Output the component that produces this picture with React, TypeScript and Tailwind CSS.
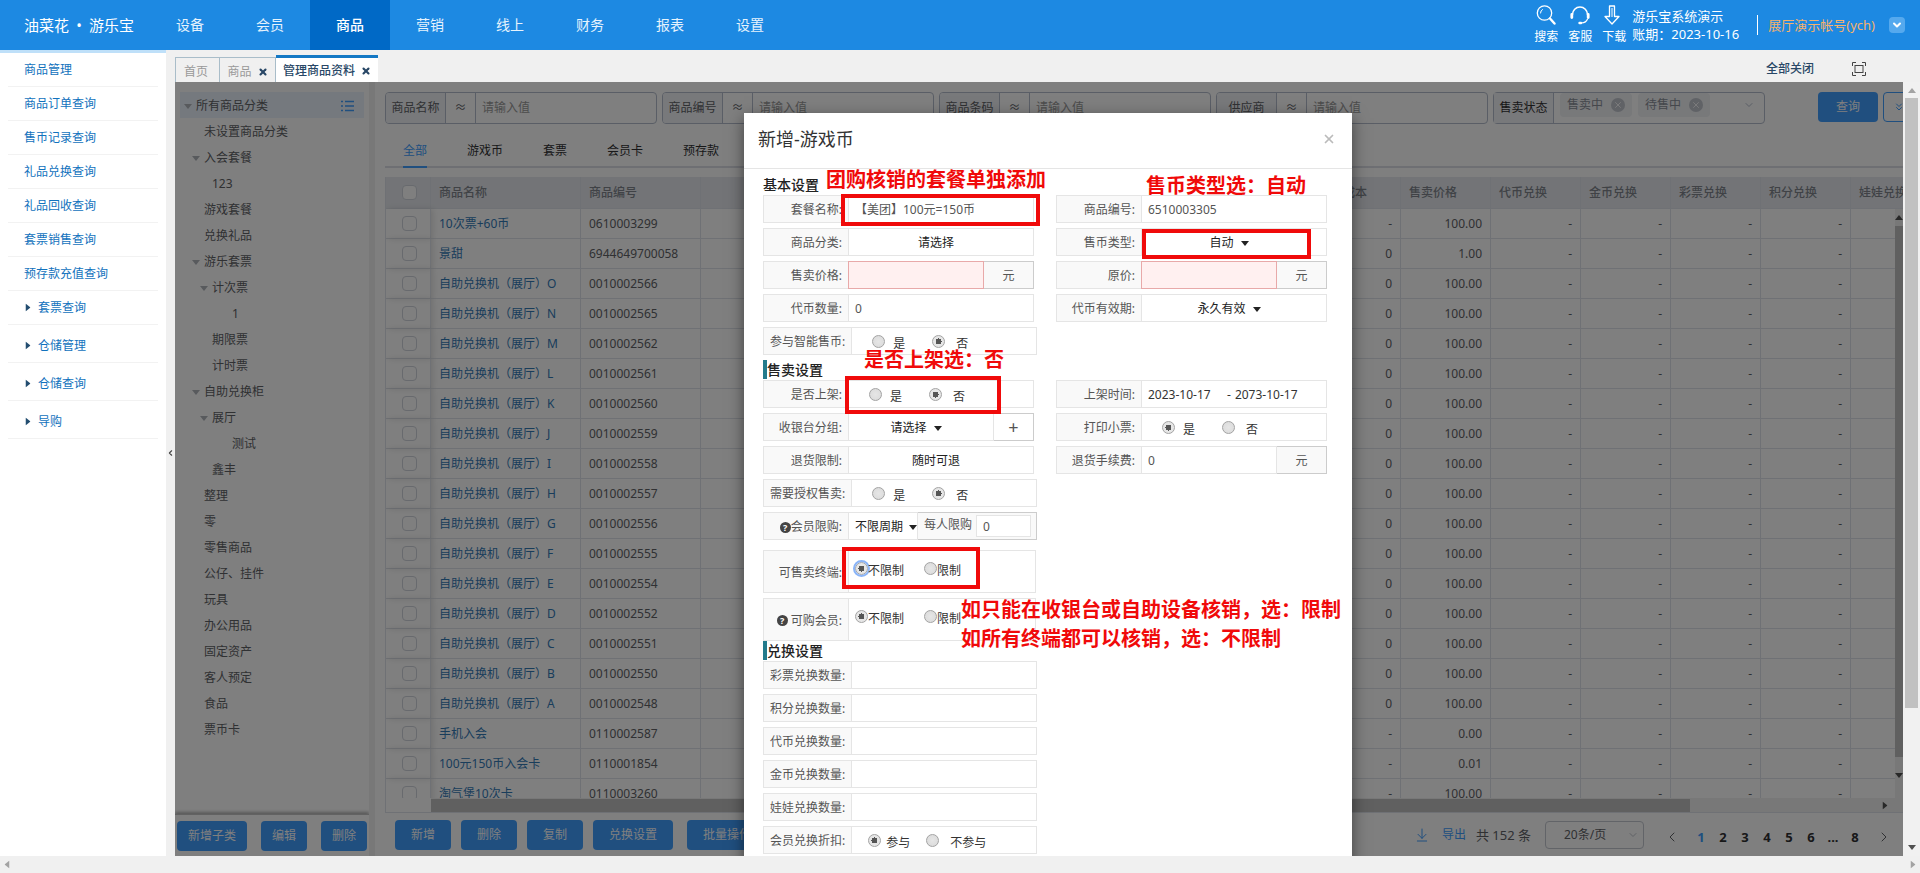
import React, { useState } from 'react';
import { Search, ChevronDown, ChevronsDown, ChevronLeft, ChevronRight, ArrowDownToLine, X } from 'lucide-react';

const NAV = ['设备', '会员', '商品', '营销', '线上', '财务', '报表', '设置'];

const MENU = ['商品管理', '商品订单查询', '售币记录查询', '礼品兑换查询', '礼品回收查询', '套票销售查询', '预存款充值查询'];
const MENU_GROUPS = ['套票查询', '仓储管理', '仓储查询', '导购'];

const INDENT = ['pl-1', 'pl-3', 'pl-5', 'pl-10'];

const TREE = [
  { name: '所有商品分类', level: 0, open: true },
  { name: '未设置商品分类', level: 1 },
  { name: '入会套餐', level: 1, open: true },
  { name: '123', level: 2 },
  { name: '游戏套餐', level: 1 },
  { name: '兑换礼品', level: 1 },
  { name: '游乐套票', level: 1, open: true },
  { name: '计次票', level: 2, open: true },
  { name: '1', level: 3 },
  { name: '期限票', level: 2 },
  { name: '计时票', level: 2 },
  { name: '自助兑换柜', level: 1, open: true },
  { name: '展厅', level: 2, open: true },
  { name: '测试', level: 3 },
  { name: '鑫丰', level: 2 },
  { name: '整理', level: 1 },
  { name: '零', level: 1 },
  { name: '零售商品', level: 1 },
  { name: '公仔、挂件', level: 1 },
  { name: '玩具', level: 1 },
  { name: '办公用品', level: 1 },
  { name: '固定资产', level: 1 },
  { name: '客人预定', level: 1 },
  { name: '食品', level: 1 },
  { name: '票币卡', level: 1 },
];

const GOODS = [
  ['10次票+60币', '0610003299', '-', '100.00'],
  ['景甜', '6944649700058', '0', '1.00'],
  ['自助兑换机（展厅）O', '0010002566', '0', '100.00'],
  ['自助兑换机（展厅）N', '0010002565', '0', '100.00'],
  ['自助兑换机（展厅）M', '0010002562', '0', '100.00'],
  ['自助兑换机（展厅）L', '0010002561', '0', '100.00'],
  ['自助兑换机（展厅）K', '0010002560', '0', '100.00'],
  ['自助兑换机（展厅）J', '0010002559', '0', '100.00'],
  ['自助兑换机（展厅）I', '0010002558', '0', '100.00'],
  ['自助兑换机（展厅）H', '0010002557', '0', '100.00'],
  ['自助兑换机（展厅）G', '0010002556', '0', '100.00'],
  ['自助兑换机（展厅）F', '0010002555', '0', '100.00'],
  ['自助兑换机（展厅）E', '0010002554', '0', '100.00'],
  ['自助兑换机（展厅）D', '0010002552', '0', '100.00'],
  ['自助兑换机（展厅）C', '0010002551', '0', '100.00'],
  ['自助兑换机（展厅）B', '0010002550', '0', '100.00'],
  ['自助兑换机（展厅）A', '0010002548', '0', '100.00'],
  ['手机入会', '0110002587', '-', '0.00'],
  ['100元150币入会卡', '0110001854', '-', '0.01'],
  ['淘气堡10次卡', '0110003260', '-', '100.00'],
];

const EXCHANGE = ['代币兑换', '金币兑换', '彩票兑换', '积分兑换', '娃娃兑换'];

function Triangle({ className = '' }: { className?: string }) {
  return (
    <svg viewBox="0 0 8 5" className={`w-2 h-[5px] shrink-0 fill-current ${className}`}>
      <path d="M0 0h8L4 5z" />
    </svg>
  );
}

function HeaderIcon({ label, children }: { label: string; children: React.ReactNode }) {
  return (
    <button className="w-6 flex flex-col items-center gap-1 text-xs leading-4 whitespace-nowrap">
      {children}
      {label}
    </button>
  );
}

function Header() {
  return (
    <header className="h-[50px] shrink-0 flex items-stretch bg-[#1d89e2] text-white">
      <div className="w-[150px] pl-6 flex items-center text-[15px] whitespace-nowrap">
        油菜花<span className="w-5 text-center">•</span>游乐宝
      </div>
      <nav className="flex text-sm">
        {NAV.map((item) => (
          <a
            key={item}
            href="#"
            className={`w-20 flex items-center justify-center ${item === '商品' ? 'bg-[#0069c6] font-medium' : 'text-[#e6f3fd]'}`}
          >
            {item}
          </a>
        ))}
      </nav>
      <div className="ml-auto pr-[15px] flex items-center">
        <div className="flex gap-[10px] pr-[6px]">
          <HeaderIcon label="搜索">
            <svg viewBox="0 0 20 20" className="w-5 h-5" fill="none" stroke="currentColor" strokeLinecap="round">
              <circle cx="8.5" cy="8" r="7.2" strokeWidth="1.3" />
              <path d="M4.500 8a4 4 0 0 1 2-3.500" strokeWidth="1" />
              <path d="M14 13.500l4.500 5" strokeWidth="2.4" />
            </svg>
          </HeaderIcon>
          <HeaderIcon label="客服">
            <svg viewBox="0 0 20 20" className="w-5 h-5" fill="none" stroke="currentColor" strokeLinecap="round">
              <path d="M2.5 9.5a7.5 7.5 0 0 1 15 0" strokeWidth="1.6" />
              <path d="M1.8 9.5v3M18.2 9.5v3" strokeWidth="2.8" />
              <path d="M17.5 14c-.8 2.2-3 3.8-6 4" strokeWidth="1.2" />
              <path d="M9.5 18h1.5" strokeWidth="2.4" />
            </svg>
          </HeaderIcon>
          <HeaderIcon label="下载">
            <svg viewBox="0 0 20 20" className="w-5 h-5" fill="none" stroke="currentColor" strokeWidth="1.3" strokeLinejoin="round">
              <path d="M5.5 1h5v10.5H15L8 19 1 11.500h4.500z" />
              <path d="M8 3v9" strokeWidth="1" />
            </svg>
          </HeaderIcon>
        </div>
        <div className="w-[113px] text-[13px] leading-[18px] whitespace-nowrap">
          <p>游乐宝系统演示</p>
          <p>账期：2023-10-16</p>
        </div>
        <div className="ml-3 w-px h-5 bg-white" />
        <span className="ml-[10px] mr-[14px] text-[13px] text-[#f6b26b] whitespace-nowrap">展厅演示帐号(ych)</span>
        <button aria-label="账号菜单" className="w-4 h-4 flex items-center justify-center rounded-sm bg-[#55a9ee]">
          <ChevronDown className="w-3 h-3" strokeWidth={4} />
        </button>
      </div>
    </header>
  );
}

function Sidebar() {
  return (
    <aside className="w-[166px] shrink-0 bg-white border-t-[3px] border-[#bfe0f9] px-2 text-[#1272bd]">
      {MENU.map((item) => (
        <a key={item} href="#" className="h-[34px] pl-4 flex items-center border-b border-[#f2f2f2]">
          {item}
        </a>
      ))}
      <div className="flex flex-col gap-1">
        {MENU_GROUPS.map((item) => (
          <a key={item} href="#" className="h-[34px] pl-4 flex items-center gap-[6px] border-b border-[#f2f2f2]">
            <Triangle className="-rotate-90 text-[#234d70]" />
            {item}
          </a>
        ))}
      </div>
    </aside>
  );
}

function TabBar() {
  return (
    <div className="h-8 flex items-end">
      <a href="#" className="w-[45px] h-[25px] flex items-center pl-2 border border-b-0 border-[#a9bdc9] text-[#999] pt-1">
        首页
      </a>
      <a href="#" className="w-14 h-[25px] flex items-center justify-center gap-[6px] border border-b-0 border-l-0 border-[#a9bdc9] text-[#999] pt-1">
        商品
        <X className="w-[10px] h-[10px] text-[#284766]" strokeWidth={5} />
      </a>
      <a href="#" className="w-[102px] h-[27px] flex items-center justify-center gap-[6px] border-t-[3px] border-[#1478c4] bg-white text-[#284766] font-medium pt-[2px]">
        管理商品资料
        <X className="w-[10px] h-[10px]" strokeWidth={5} />
      </a>
      <div className="ml-auto h-[27px] flex items-center pr-[54px] text-[#284766]">
        <button className="font-medium">全部关闭</button>
        <button aria-label="全屏" className="ml-[38px]">
          <svg viewBox="0 0 14 14" className="w-[14px] h-[14px]" fill="none" stroke="#444" strokeWidth="1">
            <rect x="3" y="3.500" width="8" height="7" />
            <path d="M.5 4V.5H4M10 .5h3.500V4M13.500 10v3.500H10M4 13.500H.5V10" />
          </svg>
        </button>
      </div>
    </div>
  );
}

function Button({ children, className = '' }: { children: React.ReactNode; className?: string }) {
  return (
    <button className={`h-[30px] shrink-0 rounded bg-[#409eff] text-white whitespace-nowrap ${className}`}>{children}</button>
  );
}

function CategoryTree() {
  return (
    <div className="w-[194px] shrink-0 flex flex-col bg-white text-[#606266]">
      <ul className="flex-1 min-h-0 overflow-hidden pt-[10px] px-[5px]">
        {TREE.map((node, i) => (
          <li
            key={i}
            className={`h-[26px] flex items-center gap-1 pt-[2px] pr-[10px] ${INDENT[node.level]} ${i === 0 ? 'bg-[#ebf3fc]' : ''}`}
          >
            <span className="w-2 flex text-[#b0b4bb]">{node.open && <Triangle />}</span>
            {node.name}
            {i === 0 && (
              <svg viewBox="0 0 13 12" className="ml-auto w-[13px] h-3" stroke="#409eff" strokeWidth="1.500">
                <path d="M0 1.500h2M4 1.500h9M0 6h2M4 6h9M0 10.500h2M4 10.500h9" />
              </svg>
            )}
          </li>
        ))}
      </ul>
      <div className="h-[42px] flex items-center gap-[14px] pl-[2px] border-t border-[#c4c4c4] shadow-[0_-2px_3px_rgba(0,0,0,0.3)]">
        <Button className="w-[70px]">新增子类</Button>
        <Button className="w-[46px]">编辑</Button>
        <Button className="w-[46px]">删除</Button>
      </div>
    </div>
  );
}

function SearchField({ id, label }: { id: string; label: string }) {
  return (
    <div className="w-[272px] shrink-0 flex items-stretch border border-[#b4bccc] rounded overflow-hidden">
      <label htmlFor={id} className="w-[60px] shrink-0 flex items-center justify-center bg-[#f0f2f6] border-r border-[#b4bccc]">
        {label}
      </label>
      <span className="w-[30px] shrink-0 flex items-center justify-center border-r border-[#b4bccc]">≈</span>
      <input id={id} placeholder="请输入值" className="min-w-0 flex-1 px-[6px] outline-none placeholder:text-[#999]" />
    </div>
  );
}

function Tag({ children }: { children: React.ReactNode }) {
  return (
    <span className="h-6 w-[72px] flex items-center justify-center gap-2 rounded-sm bg-[#f0f2f5] text-[#8a8f99]">
      {children}
      <span className="w-[14px] h-[14px] rounded-full bg-[#c0c4cc] text-white flex items-center justify-center">
        <X className="w-[10px] h-[10px]" />
      </span>
    </span>
  );
}

function SearchBar() {
  return (
    <div className="h-8 flex items-stretch gap-[5px] text-[#606266]">
      <SearchField id="q-name" label="商品名称" />
      <SearchField id="q-code" label="商品编号" />
      <SearchField id="q-barcode" label="商品条码" />
      <SearchField id="q-supplier" label="供应商" />
      <div className="w-[272px] shrink-0 flex border border-[#b4bccc] rounded">
        <span className="w-[60px] flex items-center justify-center bg-[#f0f2f6] border-r border-[#b4bccc] text-[#303133]">售卖状态</span>
        <div className="flex-1 flex items-start gap-[6px] pl-[6px] pr-[9px]">
          <Tag>售卖中</Tag>
          <Tag>待售中</Tag>
          <ChevronDown className="ml-auto w-3 h-6 text-[#b4bccc]" strokeWidth={2} />
        </div>
      </div>
      <Button className="ml-12 w-[60px]">查询</Button>
      <button aria-label="展开" className="w-[30px] h-[30px] shrink-0 border border-[#409eff] rounded text-[#409eff] pl-[9px]">
        <ChevronsDown className="w-3 h-3" />
      </button>
    </div>
  );
}

function GoodsTable() {
  const th = 'px-2 border-b border-r border-[#dfe3ea] bg-[#e6e9ee] text-left font-medium text-[#80858d] whitespace-nowrap';
  const td = 'px-2 border-b border-r border-[#dfe3ea]';
  const box = 'block ml-2 appearance-none w-[15px] h-[15px] border border-[#d0d4dc] rounded-sm bg-white';
  return (
    <div className="relative flex-1 min-h-0 mt-[9px] flex flex-col overflow-hidden border-l border-b border-[#dfe3ea]">
      <div className="flex-1 min-h-0 overflow-hidden">
        <table className="w-[1555px] table-fixed border-separate border-spacing-0 text-[#606266]">
          <colgroup>
            <col className="w-[45px]" />
            <col className="w-[150px]" />
            <col className="w-[120px]" />
            <col className="w-[610px]" />
            <col span={7} className="w-[90px]" />
          </colgroup>
          <thead>
            <tr className="h-8">
              <th className={th}>
                <input type="checkbox" aria-label="全选" className={box} />
              </th>
              <th className={th}>商品名称</th>
              <th className={th}>商品编号</th>
              <th className={th}></th>
              <th className={th}>商品成本</th>
              <th className={th}>售卖价格</th>
              {EXCHANGE.map((name) => (
                <th key={name} className={th}>{name}</th>
              ))}
            </tr>
          </thead>
          <tbody>
            {GOODS.map(([name, code, cost, price]) => (
              <tr key={code} className="h-[30px]">
                <td className={`${td} shadow-[2px_0_6px_rgba(0,0,0,0.12)]`}>
                  <input type="checkbox" aria-label={name} className={box} />
                </td>
                <td className={`${td} text-[#337ab7] whitespace-nowrap`}>{name}</td>
                <td className={td}>{code}</td>
                <td className={td}></td>
                <td className={`${td} text-right`}>{cost}</td>
                <td className={`${td} text-right`}>{price}</td>
                {EXCHANGE.map((col) => (
                  <td key={col} className={`${td} text-right`}>-</td>
                ))}
              </tr>
            ))}
          </tbody>
        </table>
      </div>
      <div className="h-[14px] shrink-0 ml-[45px] flex items-center bg-[#f1f1f1] pr-[14px]">
        <div className="w-[1259px] h-[13px] bg-[#c1c1c1]" />
        <Triangle className="ml-auto -rotate-90 text-[#505050]" />
      </div>
      {/* body scrollbar, half hidden behind the page edge */}
      <div className="absolute right-0 top-8 bottom-[14px] w-2 flex flex-col items-center bg-[#f1f1f1] pt-[6px] pb-5 text-[#505050]">
        <Triangle className="rotate-180" />
        <div className="mt-[6px] flex-1 w-2 bg-[#c1c1c1]" />
        <Triangle className="mt-4" />
      </div>
    </div>
  );
}

function Pager() {
  return (
    <div className="ml-auto shrink-0 flex items-center pr-[11px] text-[#606266]">
      <button className="flex items-center gap-3 text-[#409eff]">
        <ArrowDownToLine className="w-4 h-4" strokeWidth={1.500} />
        导出
      </button>
      <span className="ml-[10px] text-[13px]">共 152 条</span>
      <div className="ml-[14px] w-[99px] h-7 flex items-center border border-[#c4c8d0] rounded-sm pl-[18px] pr-1">
        <select aria-label="每页条数" className="appearance-none flex-1 outline-none">
          <option>20条/页</option>
        </select>
        <ChevronDown className="w-3 h-3 text-[#c0c4cc]" />
      </div>
      <div className="flex items-center pt-1">
        <button aria-label="上一页" className="ml-5">
          <ChevronLeft className="w-4 h-4" strokeWidth={1.500} />
        </button>
        <div className="flex mx-[10px] text-[13px] font-bold text-[#303133]">
          {['1', '2', '3', '4', '5', '6', '...', '8'].map((p) => (
            <button key={p} className={`w-[22px] ${p === '1' ? 'text-[#409eff]' : ''}`}>{p}</button>
          ))}
        </div>
        <button aria-label="下一页">
          <ChevronRight className="w-4 h-4" strokeWidth={1.500} />
        </button>
      </div>
    </div>
  );
}

function GoodsPanel() {
  return (
    <div className="flex-1 min-w-0 flex flex-col overflow-hidden bg-white pt-[10px] pl-[10px]">
      <SearchBar />
      <div className="mt-3 h-8 shrink-0 flex gap-10 pl-[18px] border-b-2 border-[#dcdfe6] text-[#303133]">
        {['全部', '游戏币', '套票', '会员卡', '预存款'].map((tab, i) => (
          <button key={tab} className={`h-8 border-b-2 whitespace-nowrap ${i === 0 ? 'border-[#409eff] text-[#409eff]' : 'border-transparent'}`}>
            {tab}
          </button>
        ))}
      </div>
      <GoodsTable />
      <div className="h-[43px] shrink-0 flex items-center gap-[10px] pl-[10px]">
        <Button className="px-4">新增</Button>
        <Button className="px-4">删除</Button>
        <Button className="px-4">复制</Button>
        <Button className="px-4">兑换设置</Button>
        <Button className="ml-1 px-4">批量操作</Button>
        <Pager />
      </div>
    </div>
  );
}

// ---- 新增弹窗 ----

const LINE = 'border-[#e5e5e5]';

function FormRow({ label, id, help, tall, children }: {
  label: string; id?: string; help?: boolean; tall?: boolean; children: React.ReactNode;
}) {
  return (
    <div className={`flex items-stretch ${tall ? 'h-[43px]' : 'h-7'}`}>
      <label
        htmlFor={id}
        className={`min-w-[85px] shrink-0 flex items-center justify-end px-[6px] pt-[2px] border border-r-0 ${LINE} bg-[#f9f9f9] text-[#555] whitespace-nowrap`}
      >
        {help && (
          <span className="w-[11px] h-[11px] rounded-full bg-[#444] text-white text-[9px] leading-[11px] font-bold text-center">?</span>
        )}
        {label}:
      </label>
      {children}
    </div>
  );
}

function TextField({ id, value = '', unit }: { id: string; value?: string; unit?: boolean }) {
  return (
    <div className="w-[186px] flex">
      <input
        id={id}
        defaultValue={value}
        className={`min-w-0 flex-1 px-[6px] pt-[2px] border ${LINE} bg-white text-[#555] outline-none`}
      />
      {unit && (
        <span className="w-[50px] flex items-center justify-center pt-[2px] border border-l-0 border-[#ccc] bg-[#f9f9f9] text-[#555]">元</span>
      )}
    </div>
  );
}

function PriceField({ id }: { id: string }) {
  return (
    <div className="w-[186px] flex">
      <input id={id} className="min-w-0 flex-1 px-[6px] border border-[#e8a9a9] bg-[#fff0f0] outline-none" />
      <span className="w-[50px] flex items-center justify-center pt-[2px] border border-l-0 border-[#ccc] bg-[#f9f9f9] text-[#555]">元</span>
    </div>
  );
}

function SelectField({ id, value, caret = true, add }: { id: string; value: string; caret?: boolean; add?: boolean }) {
  return (
    <div className="w-[186px] flex">
      <div className={`flex-1 flex items-center justify-center gap-[7px] pt-[2px] pr-[10px] border ${LINE} bg-white text-[#222]`}>
        <select id={id} className="appearance-none [field-sizing:content] outline-none">
          <option>{value}</option>
        </select>
        {caret && <Triangle />}
      </div>
      {add && (
        <button aria-label="新增分组" className="w-10 border border-l-0 border-[#ccc] bg-white text-lg leading-4 text-[#555]">+</button>
      )}
    </div>
  );
}

const RADIO =
  'appearance-none w-[13px] h-[13px] shrink-0 rounded-full border border-[#a3a3a3] bg-[radial-gradient(circle,#e6e6e6_0%,#d9d9d9_100%)] checked:bg-[radial-gradient(circle,#555_0,#555_3px,#e6e6e6_3px)]';

function YesNo({ name, options = ['是', '否'], checked, compact }: {
  name: string; options?: string[]; checked: number; compact?: boolean;
}) {
  const [value, setValue] = useState(checked);
  return (
    <div className={`w-[186px] flex items-center ${compact ? 'gap-4 pl-4' : 'gap-[27px] pl-5'} border ${LINE} bg-white text-[#333]`}>
      {options.map((opt, i) => (
        <label key={opt} className={`flex items-center ${i === 0 ? (compact ? 'gap-[5px]' : 'gap-2') : 'gap-[11px]'} whitespace-nowrap`}>
          <input type="radio" name={name} checked={value === i} onChange={() => setValue(i)} className={RADIO} />
          <span className="pt-[6px]">{opt}</span>
        </label>
      ))}
    </div>
  );
}

function LimitField({ name, focus }: { name: string; focus?: boolean }) {
  const [value, setValue] = useState(0);
  return (
    <div className={`w-[188px] flex items-center gap-5 pl-[6px] pb-[6px] border ${LINE} bg-white text-[#333]`}>
      {['不限制', '限制'].map((opt, i) => (
        <label key={opt} className="flex items-center whitespace-nowrap">
          <input
            type="radio"
            name={name}
            checked={value === i}
            onChange={() => setValue(i)}
            className={`${RADIO} ${focus && i === 0 ? 'outline-2 outline-[#8ab4f8]' : ''}`}
          />
          <span className="pt-1">{opt}</span>
        </label>
      ))}
    </div>
  );
}

function SectionTitle({ children, bar = true }: { children: React.ReactNode; bar?: boolean }) {
  return (
    <h3 className={`h-[19px] mb-px flex items-center text-sm font-medium text-[#222] ${bar ? 'border-l-4 border-[#237b8c]' : ''}`}>
      {children}
    </h3>
  );
}

const GRID = 'grid grid-cols-[293px_271px] gap-y-[5px] mb-[5px]';
const NOTE = 'absolute text-xl leading-6 font-bold text-[#f00a0a] whitespace-nowrap';
const FRAME = 'absolute border-4 border-[#f00a0a]';

// red marks explaining how to fill in the form
function Notes() {
  return (
    <div className="absolute inset-0 pointer-events-none">
      <p className={`${NOTE} left-[82px] top-[55px]`}>团购核销的套餐单独添加</p>
      <div className={`${FRAME} left-[97px] top-[81px] w-[199px] h-8`} />
      <p className={`${NOTE} left-[402px] top-[61px]`}>售币类型选：自动</p>
      <div className={`${FRAME} left-[398px] top-[116px] w-[169px] h-[30px]`} />
      <p className={`${NOTE} left-[120px] top-[235px]`}>是否上架选：否</p>
      <div className={`${FRAME} left-[101px] top-[263px] w-[156px] h-[38px]`} />
      <div className={`${FRAME} left-[98px] top-[434px] w-[138px] h-[42px]`} />
      <p className={`${NOTE} left-[217px] top-[485px]`}>如只能在收银台或自助设备核销，选：限制</p>
      <p className={`${NOTE} left-[217px] top-[514px]`}>如所有终端都可以核销，选：不限制</p>
    </div>
  );
}

function AddModal() {
  return (
    <div className="absolute inset-0 flex justify-center items-start pt-[31px] pl-[18px] bg-black/50 overflow-hidden">
      <div role="dialog" className="relative w-[608px] shrink-0 bg-white pb-6 shadow-[0_5px_15px_rgba(0,0,0,0.5)]">
        <div className="h-14 flex items-center justify-between px-[14px] pb-1 border-b border-[#e5e5e5]">
          <h2 className="text-lg text-[#333]">新增-游戏币</h2>
          <button aria-label="关闭" className="pr-[2px] text-[#bbb]">
            <X className="w-[14px] h-[14px]" strokeWidth={3} />
          </button>
        </div>
        <div className="px-[19px] pt-[6px]">
          <SectionTitle bar={false}>基本设置</SectionTitle>
          <div className={GRID}>
            <FormRow label="套餐名称" id="f-name"><TextField id="f-name" value="【美团】100元=150币" /></FormRow>
            <FormRow label="商品编号" id="f-code"><TextField id="f-code" value="6510003305" /></FormRow>
            <FormRow label="商品分类" id="f-type"><SelectField id="f-type" value="请选择" caret={false} /></FormRow>
            <FormRow label="售币类型" id="f-mode"><SelectField id="f-mode" value="自动" /></FormRow>
            <FormRow label="售卖价格" id="f-price"><PriceField id="f-price" /></FormRow>
            <FormRow label="原价" id="f-origin"><PriceField id="f-origin" /></FormRow>
            <FormRow label="代币数量" id="f-count"><TextField id="f-count" value="0" /></FormRow>
            <FormRow label="代币有效期" id="f-valid"><SelectField id="f-valid" value="永久有效" /></FormRow>
            <FormRow label="参与智能售币"><YesNo name="smart" checked={1} /></FormRow>
          </div>

          <SectionTitle>售卖设置</SectionTitle>
          <div className={GRID}>
            <FormRow label="是否上架"><YesNo name="shelf" checked={1} /></FormRow>
            <FormRow label="上架时间" id="f-from">
              <div className={`w-[186px] flex items-center gap-1 pl-[6px] pt-[2px] border ${LINE} bg-white text-[#333]`}>
                <input id="f-from" defaultValue="2023-10-17" className="w-[75px] outline-none" />
                -
                <input aria-label="下架时间" defaultValue="2073-10-17" className="w-[75px] outline-none" />
              </div>
            </FormRow>
            <FormRow label="收银台分组" id="f-group"><SelectField id="f-group" value="请选择" add /></FormRow>
            <FormRow label="打印小票"><YesNo name="print" checked={0} /></FormRow>
            <FormRow label="退货限制" id="f-return"><SelectField id="f-return" value="随时可退" caret={false} /></FormRow>
            <FormRow label="退货手续费" id="f-fee"><TextField id="f-fee" value="0" unit /></FormRow>
            <div className="col-span-2">
              <FormRow label="需要授权售卖"><YesNo name="auth" checked={1} /></FormRow>
            </div>
            <FormRow label="会员限购" id="f-cycle" help>
              <div className={`w-[70px] flex items-center justify-between pl-[6px] pt-[2px] border ${LINE} bg-white text-[#222] whitespace-nowrap`}>
                <select id="f-cycle" className="appearance-none [field-sizing:content] outline-none">
                  <option>不限周期</option>
                </select>
                <Triangle />
              </div>
              <div className="w-[119px] flex items-center gap-1 pl-[6px] border border-l-0 border-[#ccc] bg-[#f9f9f9] text-[#555] whitespace-nowrap">
                <label htmlFor="f-limit" className="pb-[2px]">每人限购</label>
                <input id="f-limit" defaultValue="0" className={`w-[55px] h-[22px] px-[6px] border ${LINE} bg-white outline-none`} />
              </div>
            </FormRow>
          </div>
          <div className="flex flex-col gap-[5px] pt-[5px]">
            <FormRow label="可售卖终端" tall><LimitField name="terminal" focus /></FormRow>
            <FormRow label={'\u00a0可购会员'} help tall><LimitField name="member" /></FormRow>
          </div>

          <SectionTitle>兑换设置</SectionTitle>
          <div className="flex flex-col gap-[5px]">
            {['彩票', '积分', '代币', '金币', '娃娃'].map((kind, i) => (
              <FormRow key={kind} label={`${kind}兑换数量`} id={`f-ex${i}`}><TextField id={`f-ex${i}`} /></FormRow>
            ))}
            <FormRow label="会员兑换折扣"><YesNo name="discount" options={['参与', '不参与']} checked={0} compact /></FormRow>
          </div>
        </div>
        <Notes />
      </div>
    </div>
  );
}

export default function App() {
  return (
    <div className="h-screen flex flex-col overflow-hidden bg-[#f0f0f0] text-xs leading-4 font-['Noto_Sans','Noto_Sans_CJK_SC',sans-serif]">
      <Header />
      <div className="flex-1 min-h-0 flex">
        <Sidebar />
        <button aria-label="收起菜单" className="w-[9px] shrink-0 flex items-center justify-center text-[#444]">
          <ChevronLeft className="w-[10px] h-[10px]" strokeWidth={3} />
        </button>
        <div className="flex-1 min-w-0 flex flex-col">
          <TabBar />
          <div className="flex-1 min-h-0 flex">
            <main className="relative flex-1 min-w-0 flex overflow-hidden">
              <CategoryTree />
              <div className="w-[6px] shrink-0 bg-[#f0f0f0]" />
              <GoodsPanel />
              <AddModal />
            </main>
            <div className="w-[17px] shrink-0 flex flex-col items-center bg-[#f1f1f1] pt-[6px] pb-[6px]">
              <Triangle className="rotate-180 text-[#a3a3a3]" />
              <div className="mt-[5px] w-[13px] h-[610px] bg-[#c1c1c1]" />
              <Triangle className="mt-auto text-[#505050]" />
            </div>
          </div>
        </div>
      </div>
      <div className="h-[17px] shrink-0 flex items-center justify-between px-[3px] bg-[#f0f0f0] text-[#a3a3a3]">
        <Triangle className="rotate-90" />
        <Triangle className="-rotate-90" />
      </div>
    </div>
  );
}
